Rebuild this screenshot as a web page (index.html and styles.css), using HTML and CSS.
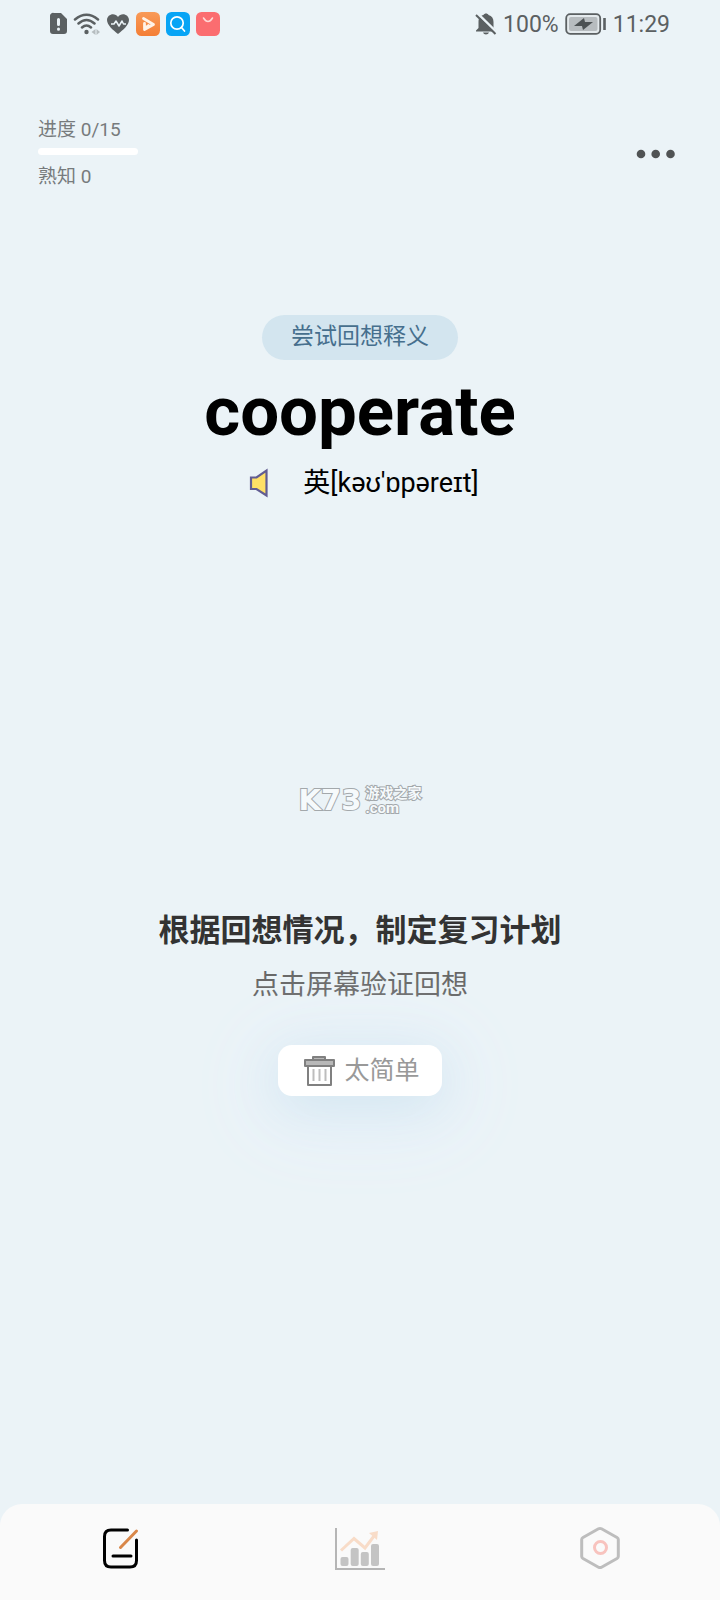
FILE: index.html
```html
<!DOCTYPE html>
<html lang="zh-CN">
<head>
<meta charset="utf-8">
<meta name="viewport" content="width=device-width, initial-scale=1">
<title>cooperate</title>
<link rel="stylesheet" href="styles.css">
</head>
<body>
<div class="status">
  <div class="status-group status-apps">
    <svg width="18" height="24" viewBox="0 0 18 24"><path fill="#5b6062" d="M5 1h7l6 6v12a3 3 0 0 1-3 3H4a3 3 0 0 1-3-3V4a3 3 0 0 1 4-3z"/><path stroke="#ebf3f7" stroke-width="3" stroke-linecap="round" d="M9.500 7.500v5M9.500 17v.2"/></svg>
    <svg width="27" height="24" viewBox="0 0 27 24" fill="none" stroke="#5b6062" stroke-width="2.500" stroke-linecap="round"><path d="M2 7.500Q13.500-2 25 7.500M5.500 11.500Q13.500 4.500 21.500 11.500M9 15.500Q13.500 11.500 18 15.500"/><circle cx="13.500" cy="20" r="2.200" fill="#5b6062" stroke="none"/><path fill="#b6bdc0" stroke="none" d="M22.500 17v6l-4-3zM23.500 17v6l3.500-3z"/></svg>
    <svg width="24" height="24" viewBox="0 0 24 24"><path fill="#5b6062" d="M12 22C7 18 1 13 1 8c0-6 8-8 11-3 3-5 11-3 11 3 0 5-6 10-11 14z"/><path fill="none" stroke="#ebf3f7" stroke-width="1.500" stroke-linejoin="round" d="M5 12h3l2-3 3 5 3-5 1.500 3H20"/></svg>
    <svg width="24" height="24" viewBox="0 0 24 24"><defs><linearGradient id="play" x2="0" y2="1"><stop stop-color="#f89a58"/><stop offset="1" stop-color="#f47e35"/></linearGradient></defs><rect width="24" height="24" rx="5.500" fill="url(#play)"/><path fill="none" stroke="#fff3e8" stroke-width="2.800" stroke-linejoin="round" stroke-linecap="round" d="M8.500 11.500v5l4-3M7.500 6.500l10 6-9 5"/></svg>
    <svg width="24" height="24" viewBox="0 0 24 24"><rect width="24" height="24" rx="5.500" fill="#08a4f5"/><g fill="none" stroke="#fff" stroke-width="1.700" stroke-linecap="round"><circle cx="11" cy="11" r="6.200"/><path d="M15.500 15.500l3 3.500"/></g></svg>
    <svg width="24" height="24" viewBox="0 0 24 24"><rect width="24" height="24" rx="5.500" fill="#fb6d70"/><path fill="none" stroke="#ffd9d6" stroke-width="1.500" stroke-linecap="round" d="M7.500 6q4.500 7 9 0"/></svg>
  </div>
  <div class="status-group status-info">
    <svg width="22" height="24" viewBox="0 0 22 24"><path fill="#5b6062" d="M1 19.500v-1l2.500-2.500v-6c0-4 2-6.500 5-7 .8-2 4.200-2 5 0 3.500 1 5 3.500 5 7v6l2.500 2.500v1zM8 20.500h6c-.8 2.500-5.200 2.500-6 0z"/><path stroke="#ebf3f7" stroke-width="2.500" d="M2.500 1.500L21.500 20"/><path stroke="#5b6062" stroke-width="2" d="M1 3l19.500 19"/></svg>
    <span>100%</span>
    <svg width="42" height="24" viewBox="0 0 42 24"><rect x="1.200" y="2.200" width="34" height="19.600" rx="4" fill="#e4eaed" stroke="#5b6062" stroke-width="1.800"/><rect x="4" y="5" width="28.500" height="14" rx="2" fill="#b7bcbf"/><path fill="#4c5153" d="M19 6l1 4h8l-10 8-1-4H9z"/><path stroke="#5b6062" stroke-width="2.600" d="M39.500 6v12"/></svg>
    <span>11:29</span>
  </div>
</div>

<header class="top">
  <div class="stats">
    <label for="progress">进度 0/15</label>
    <progress id="progress" class="bar" value="0" max="15"></progress>
    <span>熟知 0</span>
  </div>
  <button class="more" aria-label="更多"><svg width="40" height="10" viewBox="0 0 40 10" fill="#505354"><circle cx="5" cy="5" r="4.300"/><circle cx="19.700" cy="5" r="4.300"/><circle cx="34.500" cy="5" r="4.300"/></svg></button>
</header>

<main class="card">
  <span class="chip">尝试回想释义</span>
  <h1 class="word">cooperate</h1>
  <div class="phonetic">
    <button class="speaker" aria-label="发音"><svg width="20" height="30" viewBox="0 0 20 30"><path fill="#ffe066" stroke="#625d92" stroke-width="2.200" d="M2 9.500h5.500L17.500 2.500v25L7.500 21H2z"/></svg></button>
    <span>英[kəʊ'ɒpəreɪt]</span>
  </div>
  <div class="mark">
    <span class="mark-logo">K73</span>
    <span class="mark-side"><span class="mark-name">游戏之家</span><span class="mark-com">.com</span></span>
  </div>
  <h2 class="plan">根据回想情况，制定复习计划</h2>
  <p class="hint">点击屏幕验证回想</p>
  <button class="easy">
    <svg width="32" height="32" viewBox="0 0 32 32"><path fill="#fff" stroke="#808080" stroke-width="2" stroke-linejoin="round" d="M5 11h23v19H5z"/><path fill="#b8b8b8" stroke="#808080" stroke-width="2" stroke-linejoin="round" d="M2 5h29v6H2zM10 2h12v3H10z"/><path stroke="#bdbdbd" stroke-width="2" d="M10.500 14v12M16.500 14v12M22.500 14v12"/></svg>
    <span>太简单</span>
  </button>
</main>

<nav class="tabs">
  <a class="tab" href="#study" aria-label="学习"><svg width="40" height="44" viewBox="0 0 40 44" fill="none" stroke="#000" stroke-width="3" stroke-linecap="round"><path d="M27.500 4H11q-6.500 0-6.500 6.500v24q0 6.500 6.500 6.500h19q6.500 0 6.500-6.500V14M13 30h18"/><path stroke="#d98749" d="M20.500 21.500L36.500 5"/></svg></a>
  <a class="tab" href="#stats" aria-label="统计"><svg width="52" height="44" viewBox="0 0 52 44"><path fill="none" stroke="#f8dcc8" stroke-width="3" d="M7 24.500L20 12.500 31 22 40 10"/><path fill="#f8dcc8" d="M35 7l9-2-1 9z"/><g fill="#c4c4c4"><rect x="6.500" y="31" width="8" height="9" rx="2"/><rect x="16.700" y="22" width="8" height="18" rx="2"/><rect x="26.800" y="26" width="8" height="14" rx="2"/><rect x="37" y="18" width="8" height="22" rx="2"/></g><path fill="none" stroke="#b5b5b5" stroke-width="2" d="M2 2v41.500M1 43h50"/></svg></a>
  <a class="tab" href="#settings" aria-label="设置"><svg width="40" height="44" viewBox="0 0 40 44" fill="none"><path stroke="#bdbdbd" stroke-width="3" stroke-linejoin="round" d="M18.500 2.800q1.500-.8 3 0L37 11.500q1.300.8 1.300 2v17q0 1.200-1.300 2L21.500 41.200q-1.500.8-3 0L3 32.500q-1.300-.8-1.300-2v-17q0-1.200 1.300-2z"/><circle cx="20.500" cy="21.500" r="6" stroke="#f8c3be" stroke-width="3"/></svg></a>
</nav>
</body>
</html>
```
FILE: styles.css
```css
* { box-sizing: border-box; }

body {
  margin: 0;
  min-height: 100vh;
  display: flex;
  flex-direction: column;
  background: #ebf3f7;
  font-family: Roboto, "Noto Sans CJK SC", sans-serif;
}

button {
  border: 0;
  padding: 0;
  background: none;
  font: inherit;
  cursor: pointer;
}

svg { display: block; flex: none; }

h1, h2, p { margin: 0; }

.status {
  height: 48px;
  padding: 0 50px 0 49px;
  display: flex;
  align-items: center;
  justify-content: space-between;
}

.status-group { display: flex; align-items: center; gap: 6px; }

.status-info { color: #5b6062; font-size: 23px; line-height: 28px; }

.status-info span { padding-top: 2px; }

.top {
  margin-top: 70px;
  padding: 0 44px 0 38px;
  display: flex;
  align-items: center;
  justify-content: space-between;
}

.stats {
  display: flex;
  flex-direction: column;
  color: #777b7d;
  font-size: 19px;
  line-height: 24px;
}

.bar {
  appearance: none;
  display: block;
  width: 100px;
  height: 7px;
  margin: 6px 0 10px;
  border: 0;
  border-radius: 4px;
  background: #fff;
  overflow: hidden;
}

.bar::-webkit-progress-bar { background: #fff; }
.bar::-webkit-progress-value { background: #466f8d; }

.card {
  flex: 1;
  padding-top: 126px;
  display: flex;
  flex-direction: column;
  align-items: center;
}

.chip {
  padding: 5px 29px 6px;
  border-radius: 23px;
  background: #d3e5ef;
  color: #466f8d;
  font-size: 23px;
  line-height: 34px;
}

.word {
  margin-top: 12px;
  font-size: 69px;
  line-height: 80px;
  font-weight: 700;
  color: #000;
}

.phonetic {
  margin-top: 13px;
  padding-left: 8px;
  display: flex;
  align-items: center;
  gap: 34px;
  font-size: 27px;
  line-height: 36px;
  color: #000;
}

.mark {
  margin-top: 284px;
  display: flex;
  align-items: center;
  gap: 4px;
  color: #f6fafc;
  -webkit-text-stroke: 2px #a3a8ab;
  paint-order: stroke fill;
}

.mark-logo {
  font-family: "DejaVu Sans", sans-serif;
  font-weight: 700;
  font-size: 29px;
  line-height: 30px;
}

.mark-side { display: flex; flex-direction: column; font-weight: 700; }
.mark-name { font-size: 14px; line-height: 16px; }
.mark-com { font-size: 15px; line-height: 14px; }

.plan {
  margin-top: 94px;
  font-size: 31px;
  line-height: 44px;
  font-weight: 700;
  color: #333;
}

.hint {
  margin-top: 14px;
  font-size: 27px;
  line-height: 36px;
  color: #666;
}

.easy {
  margin-top: 42px;
  padding: 9px 22px 8px 25px;
  display: flex;
  align-items: center;
  gap: 9px;
  border-radius: 14px;
  background: #fff;
  color: #999;
  font-size: 25px;
  line-height: 34px;
  box-shadow: 0 10px 50px #d3e6f0, 0 14px 80px 16px #e6f0fa;
}

.tabs {
  height: 96px;
  display: grid;
  grid-template-columns: repeat(3, 1fr);
  place-items: center;
  padding-bottom: 8px;
  border-radius: 22px 22px 0 0;
  background: #fafafa;
}
```
